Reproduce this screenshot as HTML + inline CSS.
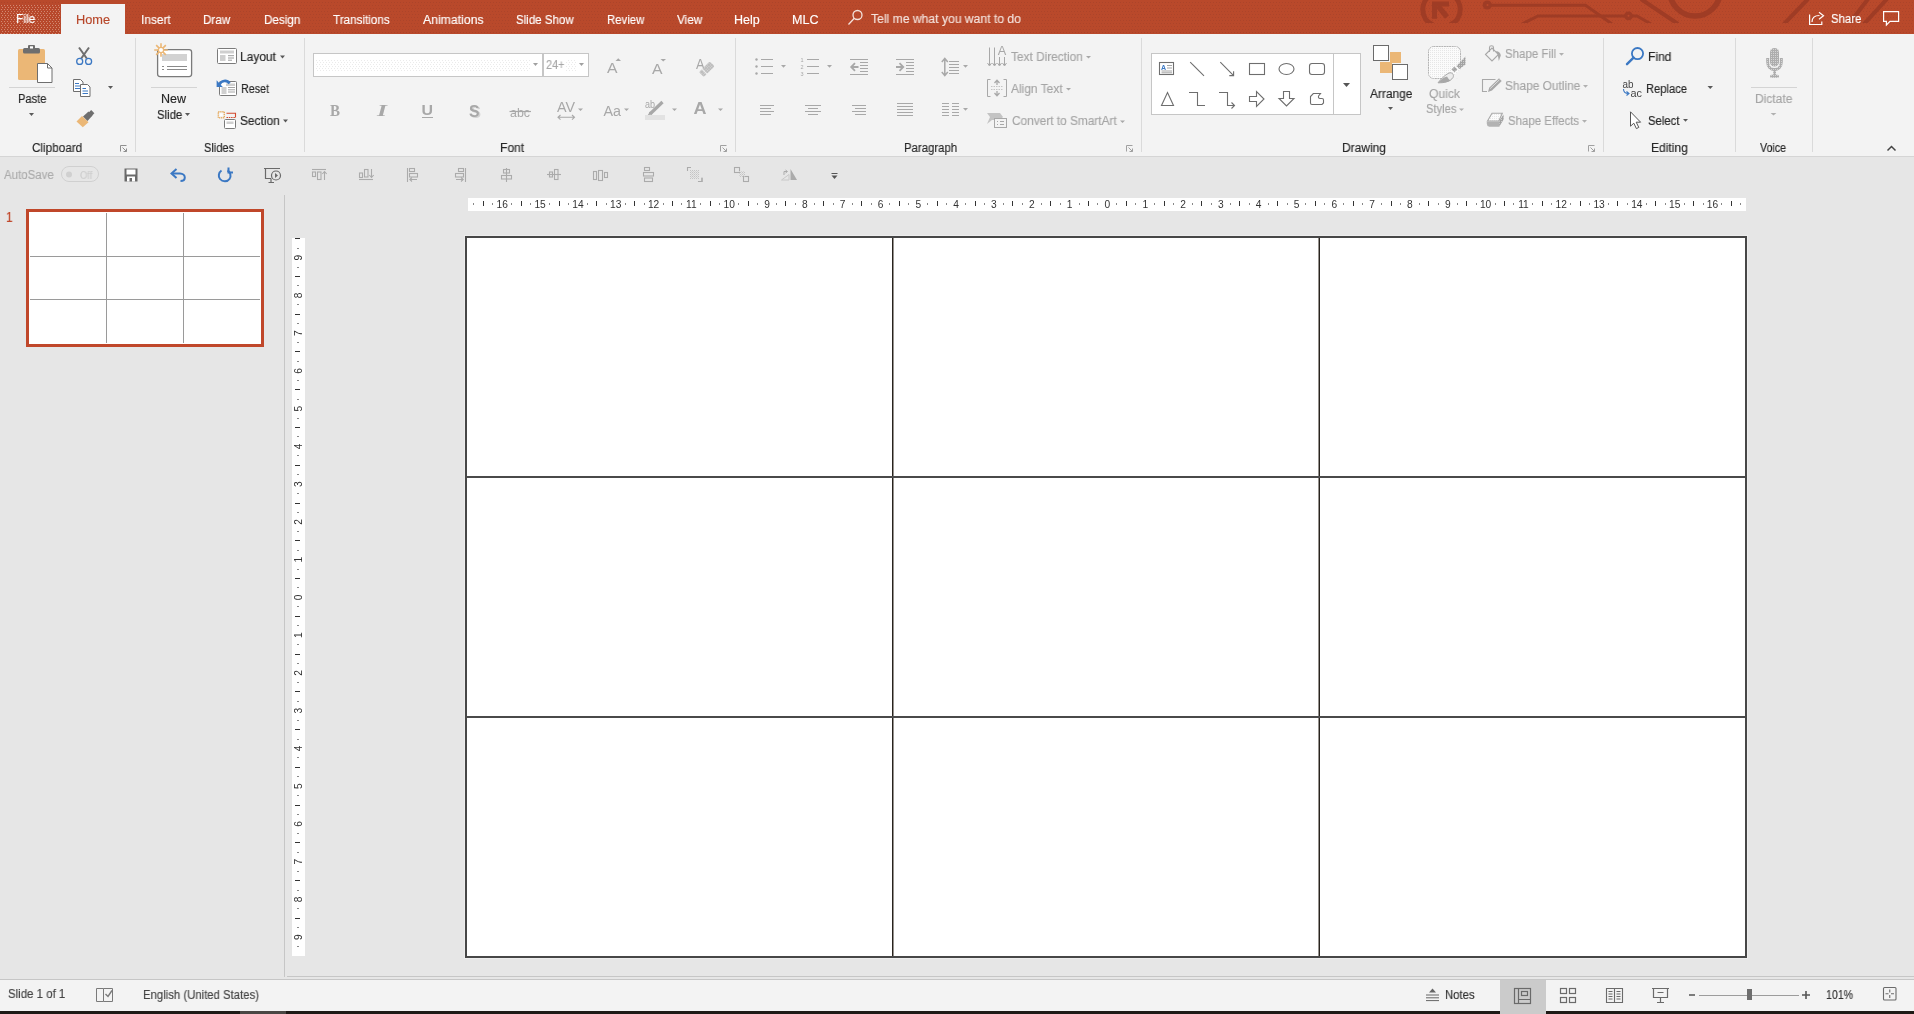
<!DOCTYPE html>
<html><head><meta charset="utf-8">
<style>
*{margin:0;padding:0;box-sizing:border-box}
html,body{width:1914px;height:1014px;overflow:hidden;background:#e6e6e6;font-family:"Liberation Sans",sans-serif;position:relative}
.a{position:absolute}
.t{position:absolute;white-space:nowrap;line-height:1;font-family:"Liberation Sans",sans-serif;transform-origin:0 0;will-change:transform;-webkit-text-stroke:0.15px currentColor}
#titlebar{left:0;top:0;width:1914px;height:34px;background:#b9492b}
#filetab{left:0;top:4px;width:61px;height:30px;background:#b9492c}
#hometab{left:61px;top:4px;width:64px;height:30px;background:#f3f3f3}
#ribbon{left:0;top:34px;width:1914px;height:122px;background:#f3f3f3}
#ribline{left:0;top:156px;width:1914px;height:1px;background:#d5d5d5}
#thumbsep{left:284px;top:195px;width:1px;height:782px;background:#c6c6c6}
#hline{left:287px;top:976px;width:1627px;height:1px;background:#c6c6c6}
#status{left:0;top:979px;width:1914px;height:32px;background:#f3f3f3;border-top:1px solid #c6c6c6}
#bottombar{left:0;top:1011px;width:1914px;height:3px;background:#1e1a16}
#slide{left:465px;top:236px;width:1282px;height:722px;background:#fff;border:2px solid #474747;box-shadow:0 0 0 1px #ededed}
.vl{position:absolute;top:0;width:2px;height:718px;background:#2b2722}
.hl{position:absolute;left:0;height:2px;width:1278px;background:#4a4a4a}
#thumb{left:26px;top:209px;width:238px;height:138px;border:3px solid #c0472a;background:#fff}
#hruler{left:468px;top:198px;width:1278px;height:13px;background:#fff}
#vruler{left:292px;top:238px;width:13px;height:718px;background:#fff}

</style></head><body>
<div id="titlebar" class="a"></div>
<div id="filetab" class="a"></div>
<div id="hometab" class="a"></div>
<div id="ribbon" class="a"></div>
<div id="ribline" class="a"></div>
<div id="thumbsep" class="a"></div>
<div id="hline" class="a"></div>
<div id="status" class="a"></div>
<div id="bottombar" class="a"></div>
<div id="thumb" class="a"></div>
<div id="hruler" class="a"></div>
<div id="vruler" class="a"></div>
<div id="slide" class="a">
  <div class="vl" style="left:425px;background:linear-gradient(to right,#28231e 50%,#96928e 50%)"></div>
  <div class="vl" style="left:851px;background:linear-gradient(to right,#96928e 50%,#28231e 50%)"></div>
  <div class="hl" style="top:238px"></div>
  <div class="hl" style="top:478px"></div>
</div>

<svg class="a" style="left:0;top:0;will-change:transform" width="1914" height="1014" viewBox="0 0 1914 1014">
<defs><pattern id="tbdots" x="0" y="0" width="3" height="6" patternUnits="userSpaceOnUse"><rect x="1" y="2" width="1" height="1" fill="#a8422a" opacity="0.75"/><rect x="0" y="5" width="1" height="1" fill="#a8422a" opacity="0.75"/></pattern><pattern id="filedots" x="0" y="0" width="3" height="4" patternUnits="userSpaceOnUse"><rect x="1" y="1" width="1" height="1" fill="#d9937b" opacity="0.85"/><rect x="2" y="3" width="1" height="1" fill="#d9937b" opacity="0.85"/></pattern></defs>
<rect x="0" y="0" width="1914" height="34" fill="url(#tbdots)"/>
<rect x="61" y="0" width="64" height="4" fill="#b9492b"/><rect x="61" y="4" width="64" height="30" fill="#f3f3f3"/>
<rect x="0" y="5" width="60" height="29" fill="url(#filedots)"/>
<defs><clipPath id="tbclip"><rect x="0" y="0" width="1914" height="23"/></clipPath></defs>
<g clip-path="url(#tbclip)">
<g fill="none" stroke="#9f3c25" stroke-width="5"><path d="M1433.1 25A16.8 16.8 0 0 1 1433.1 -6"/><path d="M1449.9 -6A16.8 16.8 0 0 1 1449.9 25"/></g>
<path d="M1438 6L1447 17" stroke="#9f3c25" stroke-width="5.2" fill="none"/><path d="M1432 1.6H1449V6.6H1437V18.8H1432Z" fill="#9f3c25"/>
<g fill="none" stroke="#9f3c25" stroke-width="3"><path d="M1490 5.3H1585.5L1612 24"/><path d="M1522 24L1538 16H1637L1651 24"/></g>
<circle cx="1487.3" cy="5" r="4.6" fill="#9f3c25"/><circle cx="1487.5" cy="5" r="1" fill="#b9492b"/>
<circle cx="1628.5" cy="15.8" r="4.4" fill="#9f3c25"/><circle cx="1628.5" cy="15.8" r="1" fill="#b9492b"/>
<g fill="none" stroke="#9f3c25" stroke-width="4"><path d="M1641 -1L1678 24"/><circle cx="1695" cy="-9.2" r="25.2" stroke-width="5.6"/><path d="M1808 -1L1784 24"/><path d="M1868 -1L1849 24"/><path d="M1887 -1L1864 24"/></g>
</g>
<g fill="none" stroke="#f4e3dd" stroke-width="1.3"><circle cx="857.5" cy="15" r="4.5"/><path d="M854.3 18.3L848.5 24.5"/></g>
<g fill="none" stroke="#fff" stroke-width="1.2"><path d="M1809.6 14.5V24.5H1821.8V21.5"/><path d="M1812 22C1812 17 1815 15.5 1819.5 15.5"/><path d="M1819 12.3L1823.5 15.8L1819 19.3"/></g>
<path d="M1883.6 11.6H1898.6V21.4H1890L1886.4 25V21.4H1883.6Z" fill="none" stroke="#fff" stroke-width="1.2"/>
<path d="M135.5 38V152" stroke="#dadada"/>
<path d="M304.5 38V152" stroke="#dadada"/>
<path d="M735.5 38V152" stroke="#dadada"/>
<path d="M1141.5 38V152" stroke="#dadada"/>
<path d="M1603.5 38V152" stroke="#dadada"/>
<path d="M1735.5 38V152" stroke="#dadada"/>
<path d="M1812.5 38V152" stroke="#dadada"/>
<rect x="18" y="49" width="27" height="31" rx="1.5" fill="#ebb776"/>
<rect x="23" y="48" width="17" height="5.5" rx="1.5" fill="#6e6e6e"/><rect x="28" y="45" width="7" height="5" rx="1" fill="#6e6e6e"/><rect x="30" y="46.3" width="3" height="2.2" fill="#fff"/>
<path d="M37.5 63.5H47.5L52 68V82.5H37.5Z" fill="#fff" stroke="#6e6e6e"/><path d="M47.5 63.5V68H52" fill="none" stroke="#6e6e6e"/>
<path d="M9 87.5H55" stroke="#d4d4d4"/>
<path d="M29 113H34L31.5 116Z" fill="#595959"/>
<path d="M79 47.5L86.8 58.5M89 47.5L81.2 58.5" stroke="#6e6e6e" stroke-width="2"/>
<circle cx="79.7" cy="61.4" r="3" fill="none" stroke="#3b78c3" stroke-width="1.3"/><circle cx="88.6" cy="61.4" r="3" fill="none" stroke="#3b78c3" stroke-width="1.3"/>
<path d="M73.5 79.5H80.5L83 82V91.5H73.5Z" fill="#fff" stroke="#6e6e6e"/>
<path d="M75 83.5H79M75 86H80M75 88.5H80" stroke="#3b78c3"/>
<path d="M80.5 84.5H87.5L90 87V96.5H80.5Z" fill="#fff" stroke="#6e6e6e"/>
<path d="M82.5 88.5H86M82.5 91H88M82.5 93.5H88" stroke="#3b78c3"/>
<path d="M108 86H113L110.5 89Z" fill="#595959"/>
<path d="M76.5 121.5L82 116L88.5 122.3L82.8 127.3Z" fill="#ebb776"/>
<path d="M83 116.5L88.5 111.5L92.5 115.5L87.5 121Z" fill="#6e6e6e"/><rect x="89" y="111" width="4.5" height="4.5" transform="rotate(45 91.2 113.2)" fill="#6e6e6e"/>
<path d="M120.5 151.5V145.5H126.5" fill="none" stroke="#8f8f8f"/><path d="M122.5 147.5L126.5 151.5M126.5 148.5V151.5H123.5" fill="none" stroke="#8f8f8f"/>
<rect x="157.6" y="49.6" width="34" height="27" rx="2.5" fill="#fff" stroke="#7a7a7a" stroke-width="1.3"/>
<rect x="162" y="54" width="25" height="7" fill="#d2d2d2"/>
<path d="M162 66.5H164M167 66.5H187M162 69.5H164M167 69.5H187" stroke="#8a8a8a"/>
<path d="M163.60 50.00L167.80 50.00M162.84 51.84L165.81 54.81M161.00 52.60L161.00 56.80M159.16 51.84L156.19 54.81M158.40 50.00L154.20 50.00M159.16 48.16L156.19 45.19M161.00 47.40L161.00 43.20M162.84 48.16L165.81 45.19" stroke="#ebb776" stroke-width="1.6" fill="none"/><circle cx="161" cy="50" r="2.6" fill="#fff" stroke="#ebb776" stroke-width="1.2"/>
<path d="M151 87.5H197" stroke="#d4d4d4"/>
<path d="M185 113H190L187.5 116Z" fill="#595959"/>
<rect x="217.5" y="48.5" width="19" height="15" rx="1" fill="#fff" stroke="#7a7a7a"/>
<rect x="220" y="50.5" width="14" height="3" fill="#cfcfcf"/><rect x="220" y="55" width="5.5" height="6" fill="#cfcfcf"/>
<path d="M228 55.7H234M228 58H234M228 60.2H232" stroke="#9a9a9a"/>
<path d="M280 55.5H285L282.5 58.5Z" fill="#595959"/>
<rect x="219.5" y="81.5" width="17" height="14" rx="1" fill="#fff" stroke="#7a7a7a"/>
<rect x="226" y="83.5" width="9" height="2.5" fill="#cfcfcf"/><rect x="221.5" y="87" width="5" height="7" fill="#cfcfcf"/><path d="M228 87.5H235M228 89.8H235M228 92H235" stroke="#9a9a9a" stroke-width="0.9"/>
<path d="M219.5 84.5C221 80.5 227 79.3 229.5 83.5" fill="none" stroke="#3b78c3" stroke-width="2.6"/><path d="M216.6 80.2L222.8 87H216.6Z" fill="#3b78c3"/>
<rect x="218.3" y="111.7" width="6" height="6" fill="none" stroke="#e6aa5e" stroke-width="1.4" stroke-dasharray="1.2 0.8"/><rect x="220" y="113.4" width="2.6" height="2.6" fill="#fff"/>
<path d="M226.5 113.3H235.5V117.5" fill="none" stroke="#d24a2e" stroke-width="1.1"/><path d="M226.5 117.5H235.5" stroke="#d24a2e" stroke-width="1.1" stroke-dasharray="1.5 0.8"/>
<rect x="224.5" y="119.5" width="11" height="9" rx="1" fill="#fff" stroke="#7a7a7a"/><rect x="226.5" y="121.5" width="7" height="2.5" fill="#cfcfcf"/>
<path d="M283 119.5H288L285.5 122.5Z" fill="#595959"/>
<rect x="313.5" y="53.5" width="229" height="23" fill="#fff" stroke="#c6c6c6"/>
<rect x="543.5" y="53.5" width="45" height="23" fill="#fff" stroke="#c6c6c6"/>
<defs><pattern id="boxdots" width="3" height="4" patternUnits="userSpaceOnUse"><rect x="1" y="0" width="1" height="1" fill="#ebebeb"/><rect x="2" y="2" width="1" height="1" fill="#ebebeb"/></pattern></defs><rect x="316" y="59" width="214" height="13" fill="url(#boxdots)"/><rect x="566" y="59" width="10" height="13" fill="url(#boxdots)"/>
<path d="M533 63H538L535.5 66Z" fill="#a0a0a0"/>
<path d="M579 63H584L581.5 66Z" fill="#a0a0a0"/>
<text x="607" y="73.3" font-family="Liberation Sans" font-size="15" fill="#a8a8a8" textLength="10.5" lengthAdjust="spacingAndGlyphs">A</text>
<path d="M615.5 61H621L618.25 58.3Z" fill="#a8a8a8"/>
<text x="652" y="73.9" font-family="Liberation Sans" font-size="15" fill="#a8a8a8" textLength="10.5" lengthAdjust="spacingAndGlyphs">A</text>
<path d="M660.5 59H666L663.25 61.5Z" fill="#a8a8a8"/>
<text x="696" y="68.6" font-family="Liberation Sans" font-size="14" fill="#a8a8a8" textLength="8.5" lengthAdjust="spacingAndGlyphs">A</text>
<defs><pattern id="erdots" width="2" height="2" patternUnits="userSpaceOnUse"><rect width="2" height="2" fill="#bcbcbc"/><rect x="1" y="1" width="1" height="1" fill="#dadada"/></pattern></defs><g transform="translate(706.8 69.2) rotate(-45)"><rect x="-7.6" y="-3.4" width="15.2" height="6.8" rx="1.3" fill="url(#erdots)"/><rect x="-3.8" y="-4" width="0.9" height="8" fill="#f3f3f3"/></g>
<text x="330" y="116.3" font-family="Liberation Serif" font-weight="bold" font-size="17" fill="#a8a8a8" textLength="10" lengthAdjust="spacingAndGlyphs">B</text>
<text x="377" y="116.3" font-family="Liberation Serif" font-style="italic" font-weight="bold" font-size="17" fill="#a8a8a8" textLength="10" lengthAdjust="spacingAndGlyphs">I</text>
<text x="421.5" y="115.3" font-family="Liberation Sans" font-weight="bold" font-size="15.5" fill="#a8a8a8" textLength="11.5" lengthAdjust="spacingAndGlyphs">U</text><path d="M422 117.5H433" stroke="#a8a8a8"/>
<text x="470.5" y="117.5" font-family="Liberation Sans" font-weight="bold" font-size="17" fill="#d4d4d4" textLength="10.5" lengthAdjust="spacingAndGlyphs">S</text>
<text x="469" y="116.5" font-family="Liberation Sans" font-weight="bold" font-size="17" fill="#a8a8a8" textLength="10.5" lengthAdjust="spacingAndGlyphs">S</text>
<text x="510" y="116.5" font-family="Liberation Sans" font-size="13" fill="#a8a8a8" textLength="20" lengthAdjust="spacingAndGlyphs">abc</text><path d="M509.5 111.5H531" stroke="#a8a8a8" stroke-width="1.2"/>
<text x="557" y="112" font-family="Liberation Sans" font-size="14" fill="#a8a8a8" textLength="18" lengthAdjust="spacingAndGlyphs">AV</text>
<path d="M558 117.3H574.5M560.5 115L558 117.3L560.5 119.6M572 115L574.5 117.3L572 119.6" fill="none" stroke="#a8a8a8" stroke-width="1.1"/>
<path d="M578 108.5H583L580.5 111Z" fill="#a8a8a8"/>
<text x="603.5" y="115.5" font-family="Liberation Sans" font-size="15.5" fill="#a8a8a8" textLength="17.5" lengthAdjust="spacingAndGlyphs">Aa</text>
<path d="M624 108.5H629L626.5 111Z" fill="#a8a8a8"/>
<text x="645" y="108" font-family="Liberation Sans" font-size="10.5" fill="#a8a8a8" textLength="10" lengthAdjust="spacingAndGlyphs">ab</text>
<path d="M650 114L662.5 102" stroke="#a8a8a8" stroke-width="3.2"/><path d="M647.5 115.5L650 111.5L652.5 114Z" fill="#a8a8a8"/>
<rect x="645" y="115" width="20" height="5" fill="#e2e2e2"/>
<path d="M672 108.5H677L674.5 111Z" fill="#a8a8a8"/>
<text x="693.5" y="114" font-family="Liberation Sans" font-weight="bold" font-size="17" fill="#a8a8a8" textLength="13" lengthAdjust="spacingAndGlyphs">A</text>
<path d="M718 108.5H723L720.5 111Z" fill="#a8a8a8"/>
<path d="M720.5 151.5V145.5H726.5" fill="none" stroke="#a0a0a0"/><path d="M722.5 147.5L726.5 151.5M726.5 148.5V151.5H723.5" fill="none" stroke="#a0a0a0"/>
<g fill="#a8a8a8"><circle cx="756.5" cy="59.5" r="1.2"/><circle cx="756.5" cy="66.5" r="1.2"/><circle cx="756.5" cy="73.5" r="1.2"/></g>
<path d="M761 59.5H773M761 66.5H773M761 73.5H773" stroke="#a8a8a8"/>
<path d="M781 65H786L783.5 67.7Z" fill="#a8a8a8"/>
<g font-family="Liberation Sans" font-size="5.5" fill="#a8a8a8"><text x="800.5" y="62">1</text><text x="800.5" y="69">2</text><text x="800.5" y="76">3</text></g>
<path d="M807 59.5H819M807 66.5H819M807 73.5H819" stroke="#a8a8a8"/>
<path d="M827 65H832L829.5 67.7Z" fill="#a8a8a8"/>
<path d="M850 59.5H868M860 62.5H868M860 65.5H868M860 68.5H868M860 71.5H868M850 74.5H868" stroke="#a8a8a8"/>
<path d="M858.5 67H851.5M855 63.2L851.2 67L855 70.8" fill="none" stroke="#a8a8a8" stroke-width="1.8"/>
<path d="M896 59.5H914M906 62.5H914M906 65.5H914M906 68.5H914M906 71.5H914M896 74.5H914" stroke="#a8a8a8"/>
<path d="M896 67H903M899.5 63.2L903.3 67L899.5 70.8" fill="none" stroke="#a8a8a8" stroke-width="1.8"/>
<path d="M944.8 59V75M941.8 62L944.8 58.5L947.8 62M941.8 72L944.8 75.5L947.8 72" fill="none" stroke="#a8a8a8" stroke-width="1.5"/>
<path d="M949 61.5H959M949 64.5H959M949 67.5H959M949 70.5H959M949 73.5H959" stroke="#a8a8a8"/>
<path d="M963 65H968L965.5 67.7Z" fill="#a8a8a8"/>
<path d="M760 105.5H774M760 108.5H771M760 111.5H774M760 114.5H771" stroke="#a8a8a8"/>
<path d="M805 105.5H821M808 108.5H818M805 111.5H821M808 114.5H818" stroke="#a8a8a8"/>
<path d="M852 105.5H866M855 108.5H866M852 111.5H866M855 114.5H866" stroke="#a8a8a8"/>
<path d="M897 103.5H913M897 106.5H913M897 109.5H913M897 112.5H913M897 115.5H913" stroke="#a8a8a8"/>
<path d="M942 103.5H949M942 106.5H949M942 109.5H949M942 112.5H949M942 115.5H949M952 103.5H959M952 106.5H959M952 109.5H959M952 112.5H959M952 115.5H959" stroke="#a8a8a8"/>
<path d="M963 108H968L965.5 110.7Z" fill="#a8a8a8"/>
<path d="M989.5 47.5V65M994.5 47.5V65M999.5 57V65M1004.5 57V65" stroke="#a8a8a8"/>
<path d="M987.5 63L989.5 66L991.5 63M992.5 63L994.5 66L996.5 63M997.5 63L999.5 66L1001.5 63M1002.5 63L1004.5 66L1006.5 63" fill="none" stroke="#a8a8a8"/>
<text x="997.8" y="55" font-family="Liberation Sans" font-size="12" fill="#a8a8a8" textLength="8.5" lengthAdjust="spacingAndGlyphs">A</text>
<path d="M1086 56H1091L1088.5 58.5Z" fill="#a8a8a8"/>
<path d="M990.5 79.5H987.5V96.5H990.5M1003.5 79.5H1006.5V96.5H1003.5" fill="none" stroke="#a8a8a8"/>
<path d="M991 86.5H1003M991 89.5H1003" stroke="#c4c4c4" stroke-dasharray="1.5 1"/>
<path d="M997 80.5V85M994.5 83L997 80.3L999.5 83M997 91V95.5M994.5 93L997 95.7L999.5 93" fill="none" stroke="#a8a8a8" stroke-width="1.3"/>
<path d="M1066 88H1071L1068.5 90.5Z" fill="#a8a8a8"/>
<path d="M987 113H1000L1003 117L1000 120H992L987 124L990 117Z" fill="#c4c4c4"/>
<rect x="994.5" y="118.5" width="12" height="9" fill="#f3f3f3" stroke="#a8a8a8"/><path d="M997 121.5H998M1000 121.5H1004M997 124.5H998M1000 124.5H1004" stroke="#a8a8a8"/>
<path d="M1120 120.5H1125L1122.5 123Z" fill="#a8a8a8"/>
<path d="M1126.5 151.5V145.5H1132.5" fill="none" stroke="#a0a0a0"/><path d="M1128.5 147.5L1132.5 151.5M1132.5 148.5V151.5H1129.5" fill="none" stroke="#a0a0a0"/>
<rect x="1151.5" y="53.5" width="209" height="61" fill="#fff" stroke="#c6c6c6"/><path d="M1333.5 54V114" stroke="#c6c6c6"/>
<g fill="none" stroke="#6e6e6e" stroke-width="1.1"><rect x="1159.5" y="62.5" width="14" height="12"/><path d="M1190.2 62.2L1204 75.8"/><path d="M1220.3 62.2L1233.6 75.6M1233.6 71.3V75.6H1229.3"/><rect x="1249.5" y="63.5" width="15" height="11"/><ellipse cx="1286.5" cy="69" rx="7.5" ry="5.5"/><rect x="1309.5" y="63.5" width="15" height="11" rx="2.5"/><path d="M1161.5 105.5H1173.5L1167.5 92.5Z"/><path d="M1189 92.5H1197.5V105.5H1205"/><path d="M1219 92.5H1227.5V105.5H1234.5M1231.5 102.5L1234.5 105.5L1231.5 108.5"/><path d="M1249.5 96.5H1256.5V91.5L1264 99L1256.5 106.5V101.5H1249.5Z"/><path d="M1283.5 91.5H1289.5V98.5H1294L1286.5 106L1279 98.5H1283.5Z"/><path d="M1313.3 93.5H1320.5L1318.6 96C1318 97.5 1318.8 98.5 1320 98.5H1322C1323 98.5 1323.5 99.2 1323.5 100V103L1322 104.5H1312C1311 104.5 1310.5 104 1310.5 103V96.5Z"/></g>
<text x="1161" y="69.5" font-family="Liberation Sans" font-weight="bold" font-size="7" fill="#3b78c3">A</text>
<path d="M1167 65.5H1172M1167 68H1172M1161.5 71H1172M1161.5 72.8H1172" stroke="#9a9a9a" stroke-width="0.9"/>
<path d="M1343 83H1350L1346.5 87Z" fill="#555"/>
<rect x="1390" y="52" width="11" height="11" fill="#ebb776"/><rect x="1380" y="62" width="12" height="11" fill="#ebb776"/>
<rect x="1373.5" y="45.5" width="15" height="15" fill="#fff" stroke="#6b6b6b"/><rect x="1392.5" y="64.5" width="15" height="15" fill="#fff" stroke="#6b6b6b"/>
<path d="M1388 107H1393L1390.5 110Z" fill="#595959"/>
<defs><pattern id="ltdots" x="0" y="0" width="2" height="2" patternUnits="userSpaceOnUse"><rect width="2" height="2" fill="#fbfbfb"/><rect x="0" y="0" width="1" height="1" fill="#e6e6e6"/></pattern><pattern id="gdots" x="0" y="0" width="2" height="2" patternUnits="userSpaceOnUse"><rect width="2" height="2" fill="#a2a2a2"/><rect x="1" y="1" width="1" height="1" fill="#cdcdcd"/></pattern></defs>
<rect x="1428.5" y="46.5" width="32" height="32" rx="5" fill="url(#ltdots)" stroke="#b4b4b4" stroke-dasharray="2 0.6"/>
<path d="M1450 79.5L1461 68.5V78.5Z" fill="#f3f3f3"/>
<path d="M1456.5 66L1465.5 56.5V64.5L1459.5 69Z" fill="url(#gdots)"/>
<rect x="1452.3" y="67.3" width="4.2" height="4.2" transform="rotate(45 1454.4 69.4)" fill="url(#gdots)"/>
<path d="M1438 82.8C1441 79 1445 74.8 1449 73C1452 72 1454.5 74.5 1453 77.5C1450.5 81.5 1444.5 83 1438 82.8Z" fill="#ececec" stroke="#a8a8a8" stroke-width="1"/>
<path d="M1438 82.8C1441 79.5 1444 77 1447 76.5C1448.5 79 1450 80.5 1451 80.5C1447.5 82.5 1443 83 1438 82.8Z" fill="#a8a8a8"/>
<path d="M1459 108.5H1464L1461.5 111Z" fill="#b0b0b0"/>
<g fill="none" stroke="#a8a8a8" stroke-width="1.1"><path d="M1485.5 54.5L1492 48L1498.5 54.5L1492 61Z"/><path d="M1489.5 52V47.5Q1489.5 45.8 1491.5 45.8Q1493.5 45.8 1493.5 47.5V51.5"/></g>
<path d="M1496 51Q1500.5 51.5 1500.8 55.5L1498.8 61L1497.8 55Z" fill="#a8a8a8"/>
<path d="M1559 53H1564L1561.5 55.7Z" fill="#b0b0b0"/>
<path d="M1495.5 79.5H1482.5V91.5H1487" fill="none" stroke="#a8a8a8" stroke-width="1.1"/><path d="M1488 92L1489.2 87.8L1499 78.3L1501.7 81L1492 90.5Z" fill="#a8a8a8"/><path d="M1490.2 88.6L1499.4 79.8" stroke="#f3f3f3" stroke-width="0.7"/>
<path d="M1583 85H1588L1585.5 87.7Z" fill="#b0b0b0"/>
<path d="M1487.5 121L1492 113.3H1502.3L1498.8 121Z" fill="url(#ltdots)" stroke="#a8a8a8" stroke-width="1.1"/>
<path d="M1486.8 121.5H1498.8L1503.6 114.5V119.5L1499.3 126.8H1489.3Q1486.8 126.3 1486.8 123.8Z" fill="#b2b2b2"/><path d="M1499.5 121.3L1503.3 115V119.5L1499.3 126" fill="url(#gdots)"/>
<path d="M1582 120H1587L1584.5 122.7Z" fill="#b0b0b0"/>
<path d="M1588.5 151.5V145.5H1594.5" fill="none" stroke="#a0a0a0"/><path d="M1590.5 147.5L1594.5 151.5M1594.5 148.5V151.5H1591.5" fill="none" stroke="#a0a0a0"/>
<circle cx="1637.5" cy="53.6" r="5.6" fill="none" stroke="#3b78c3" stroke-width="1.8"/><path d="M1633.6 57.6L1627 64.2" stroke="#3b78c3" stroke-width="2.4" stroke-linecap="round"/>
<text x="1622.5" y="88" font-family="Liberation Sans" font-size="10.5" fill="#444" textLength="11" lengthAdjust="spacingAndGlyphs">ab</text>
<text x="1630.5" y="96.7" font-family="Liberation Sans" font-size="10.5" fill="#444" textLength="11.5" lengthAdjust="spacingAndGlyphs">ac</text>
<path d="M1623.5 89C1623.5 92 1625 93.5 1628.5 93.5M1626.5 91.5L1629 93.5L1626.5 95.5" fill="none" stroke="#3b78c3" stroke-width="1.1"/>
<path d="M1707.5 86H1713L1710.25 89Z" fill="#595959"/>
<path d="M1630.5 111.8V126.2L1633.8 123.2L1636.4 128.6L1638.8 127.4L1636.2 122.2H1640.6Z" fill="#fff" stroke="#555" stroke-width="1"/>
<path d="M1683 119H1688L1685.5 121.7Z" fill="#595959"/>
<defs><pattern id="micdots" width="2" height="2" patternUnits="userSpaceOnUse"><rect width="2" height="2" fill="#adadad"/><rect x="1" y="1" width="1" height="1" fill="#d4d4d4"/></pattern></defs>
<rect x="1770" y="48" width="9" height="18.5" rx="4.5" fill="url(#micdots)"/>
<path d="M1767.7 58V62C1767.7 72 1781.3 72 1781.3 62V58" fill="none" stroke="url(#micdots)" stroke-width="3"/>
<rect x="1773.2" y="69.5" width="2.8" height="6" fill="url(#micdots)"/><rect x="1770" y="74.7" width="9" height="3" rx="1.5" fill="url(#micdots)"/>
<path d="M1751 87.5H1797" stroke="#d4d4d4"/>
<path d="M1770.6 113H1776.4L1773.5 115.5Z" fill="#b0b0b0"/>
<path d="M1887.5 150.5L1891.5 146.5L1895.5 150.5" fill="none" stroke="#444" stroke-width="1.5"/>
<rect x="61.5" y="166.5" width="37" height="15" rx="7.5" fill="none" stroke="#d0d0d0"/><circle cx="69" cy="174.5" r="3" fill="#d0d0d0"/>
<path d="M124.5 168.5H137.5V181.5H124.5Z" fill="#6a6a6a"/><rect x="126.5" y="169.5" width="9" height="5" fill="#fff"/><rect x="127" y="176.5" width="8" height="5" fill="#fff"/><rect x="129.5" y="178" width="2.5" height="3.5" fill="#6a6a6a"/>
<path d="M173 173.5H180C183 173.5 184.8 175.5 184.8 177.5C184.8 179.5 183.2 181 180.5 181" fill="none" stroke="#3b78c3" stroke-width="2"/><path d="M176.5 169L171.5 173.5L176.5 178" fill="none" stroke="#3b78c3" stroke-width="2"/>
<path d="M221.5 170.5C218.5 172.5 218 176.5 220 179C222.5 182 227.5 182 229.5 179C231.5 176 230.5 172 227.5 170.5" fill="none" stroke="#3b78c3" stroke-width="2"/><path d="M228.5 167.5V172.5H233" fill="none" stroke="#3b78c3" stroke-width="2"/>
<path d="M264 168.5H280M265.5 169V178.5H271M268.5 182.5H274M271 178.5V182.5" fill="none" stroke="#6a6a6a" stroke-width="1.2"/><circle cx="276" cy="175.5" r="4.5" fill="#e6e6e6" stroke="#6a6a6a" stroke-width="1.2"/><path d="M275 173V178L278 175.5Z" fill="#6a6a6a"/>
<g fill="none" stroke="#ababab" stroke-width="1.1"><path d="M312 169.5H326"/><rect x="312.5" y="172" width="3" height="4.5"/><rect x="317.5" y="172" width="3.5" height="7.5"/><path d="M324.5 180V172M322.3 174L324.5 171.5L326.7 174"/><path d="M359 179.5H373"/><rect x="359.5" y="173" width="3" height="4.5"/><rect x="364.5" y="169.5" width="3.5" height="7.5"/><path d="M371.5 169V177M369.3 175L371.5 177.5L373.7 175"/><path d="M407.5 168V182"/><rect x="409.5" y="168.5" width="5" height="3"/><rect x="409.5" y="173.5" width="8" height="3.5"/><path d="M410 179.5H417M412 177.5L409.8 179.5L412 181.5"/><path d="M465.5 168V182"/><rect x="458.5" y="168.5" width="5" height="3"/><rect x="455.5" y="173.5" width="8" height="3.5"/><path d="M456 179.5H463M461 177.5L463.2 179.5L461 181.5"/><path d="M506.5 168V182"/><rect x="503.5" y="169.5" width="6" height="3.5"/><rect x="501.5" y="175.5" width="10" height="3.5"/><path d="M547 174.5H561"/><rect x="549.5" y="172" width="3" height="5"/><rect x="554.5" y="169.5" width="3.5" height="10"/><rect x="593.5" y="171.5" width="3" height="8"/><rect x="598.5" y="170.5" width="4" height="10"/><rect x="604.5" y="172.5" width="3" height="5"/><rect x="644.5" y="167.5" width="5" height="3"/><rect x="643.5" y="172.5" width="10" height="3.5"/><rect x="644.5" y="178" width="8" height="3.5"/></g>
<g fill="none" stroke="#ababab" stroke-width="1.1"><path d="M687.5 171V167.5H691M698.5 182V181.5H702V178M702 182V178"/><path d="M698 181.5H702V177.5"/></g>
<defs><pattern id="qdots" width="2" height="2" patternUnits="userSpaceOnUse"><rect x="0" y="0" width="1" height="1" fill="#c4c4c4"/><rect x="1" y="1" width="1" height="1" fill="#d2d2d2"/></pattern></defs><rect x="690" y="170" width="9" height="9" fill="url(#qdots)"/>
<g fill="none" stroke="#ababab" stroke-width="1.1"><rect x="734.5" y="167.5" width="5" height="5"/><rect x="743.5" y="176.5" width="5" height="5"/></g><rect x="739" y="171" width="6" height="6" fill="url(#qdots)"/>
<path d="M781.5 180L789 174.5V180Z" fill="none" stroke="#c8c8c8"/><path d="M790.5 169L797 180H790.5Z" fill="#ababab"/><path d="M784 175V171.5H787M785.5 170L787.5 171.5L785.5 173" fill="none" stroke="#ababab" stroke-width="1"/>
<path d="M831.5 173.5H837.5" stroke="#555"/><path d="M831.5 175.5H837.5L834.5 179Z" fill="#555"/>
<path d="M106.5 213V343M183.5 213V343M30 256.5H260M30 299.5H260" stroke="#9a9a9a"/>
<rect x="473" y="203" width="1" height="2" fill="#888"/><rect x="483" y="201" width="1" height="5" fill="#333"/><rect x="492" y="203" width="1" height="2" fill="#888"/><text x="502.28" y="207.6" text-anchor="middle" font-family="Liberation Sans" font-size="10.2" fill="#333">16</text><rect x="511" y="203" width="1" height="2" fill="#888"/><rect x="521" y="201" width="1" height="5" fill="#333"/><rect x="530" y="203" width="1" height="2" fill="#888"/><text x="540.10" y="207.6" text-anchor="middle" font-family="Liberation Sans" font-size="10.2" fill="#333">15</text><rect x="549" y="203" width="1" height="2" fill="#888"/><rect x="559" y="201" width="1" height="5" fill="#333"/><rect x="568" y="203" width="1" height="2" fill="#888"/><text x="577.92" y="207.6" text-anchor="middle" font-family="Liberation Sans" font-size="10.2" fill="#333">14</text><rect x="587" y="203" width="1" height="2" fill="#888"/><rect x="596" y="201" width="1" height="5" fill="#333"/><rect x="606" y="203" width="1" height="2" fill="#888"/><text x="615.74" y="207.6" text-anchor="middle" font-family="Liberation Sans" font-size="10.2" fill="#333">13</text><rect x="625" y="203" width="1" height="2" fill="#888"/><rect x="634" y="201" width="1" height="5" fill="#333"/><rect x="644" y="203" width="1" height="2" fill="#888"/><text x="653.56" y="207.6" text-anchor="middle" font-family="Liberation Sans" font-size="10.2" fill="#333">12</text><rect x="663" y="203" width="1" height="2" fill="#888"/><rect x="672" y="201" width="1" height="5" fill="#333"/><rect x="681" y="203" width="1" height="2" fill="#888"/><text x="691.38" y="207.6" text-anchor="middle" font-family="Liberation Sans" font-size="10.2" fill="#333">11</text><rect x="700" y="203" width="1" height="2" fill="#888"/><rect x="710" y="201" width="1" height="5" fill="#333"/><rect x="719" y="203" width="1" height="2" fill="#888"/><text x="729.20" y="207.6" text-anchor="middle" font-family="Liberation Sans" font-size="10.2" fill="#333">10</text><rect x="738" y="203" width="1" height="2" fill="#888"/><rect x="748" y="201" width="1" height="5" fill="#333"/><rect x="757" y="203" width="1" height="2" fill="#888"/><text x="767.02" y="207.6" text-anchor="middle" font-family="Liberation Sans" font-size="10.2" fill="#333">9</text><rect x="776" y="203" width="1" height="2" fill="#888"/><rect x="785" y="201" width="1" height="5" fill="#333"/><rect x="795" y="203" width="1" height="2" fill="#888"/><text x="804.84" y="207.6" text-anchor="middle" font-family="Liberation Sans" font-size="10.2" fill="#333">8</text><rect x="814" y="203" width="1" height="2" fill="#888"/><rect x="823" y="201" width="1" height="5" fill="#333"/><rect x="833" y="203" width="1" height="2" fill="#888"/><text x="842.66" y="207.6" text-anchor="middle" font-family="Liberation Sans" font-size="10.2" fill="#333">7</text><rect x="852" y="203" width="1" height="2" fill="#888"/><rect x="861" y="201" width="1" height="5" fill="#333"/><rect x="871" y="203" width="1" height="2" fill="#888"/><text x="880.48" y="207.6" text-anchor="middle" font-family="Liberation Sans" font-size="10.2" fill="#333">6</text><rect x="889" y="203" width="1" height="2" fill="#888"/><rect x="899" y="201" width="1" height="5" fill="#333"/><rect x="908" y="203" width="1" height="2" fill="#888"/><text x="918.30" y="207.6" text-anchor="middle" font-family="Liberation Sans" font-size="10.2" fill="#333">5</text><rect x="927" y="203" width="1" height="2" fill="#888"/><rect x="937" y="201" width="1" height="5" fill="#333"/><rect x="946" y="203" width="1" height="2" fill="#888"/><text x="956.12" y="207.6" text-anchor="middle" font-family="Liberation Sans" font-size="10.2" fill="#333">4</text><rect x="965" y="203" width="1" height="2" fill="#888"/><rect x="975" y="201" width="1" height="5" fill="#333"/><rect x="984" y="203" width="1" height="2" fill="#888"/><text x="993.94" y="207.6" text-anchor="middle" font-family="Liberation Sans" font-size="10.2" fill="#333">3</text><rect x="1003" y="203" width="1" height="2" fill="#888"/><rect x="1012" y="201" width="1" height="5" fill="#333"/><rect x="1022" y="203" width="1" height="2" fill="#888"/><text x="1031.76" y="207.6" text-anchor="middle" font-family="Liberation Sans" font-size="10.2" fill="#333">2</text><rect x="1041" y="203" width="1" height="2" fill="#888"/><rect x="1050" y="201" width="1" height="5" fill="#333"/><rect x="1060" y="203" width="1" height="2" fill="#888"/><text x="1069.58" y="207.6" text-anchor="middle" font-family="Liberation Sans" font-size="10.2" fill="#333">1</text><rect x="1079" y="203" width="1" height="2" fill="#888"/><rect x="1088" y="201" width="1" height="5" fill="#333"/><rect x="1097" y="203" width="1" height="2" fill="#888"/><text x="1107.40" y="207.6" text-anchor="middle" font-family="Liberation Sans" font-size="10.2" fill="#333">0</text><rect x="1116" y="203" width="1" height="2" fill="#888"/><rect x="1126" y="201" width="1" height="5" fill="#333"/><rect x="1135" y="203" width="1" height="2" fill="#888"/><text x="1145.22" y="207.6" text-anchor="middle" font-family="Liberation Sans" font-size="10.2" fill="#333">1</text><rect x="1154" y="203" width="1" height="2" fill="#888"/><rect x="1164" y="201" width="1" height="5" fill="#333"/><rect x="1173" y="203" width="1" height="2" fill="#888"/><text x="1183.04" y="207.6" text-anchor="middle" font-family="Liberation Sans" font-size="10.2" fill="#333">2</text><rect x="1192" y="203" width="1" height="2" fill="#888"/><rect x="1201" y="201" width="1" height="5" fill="#333"/><rect x="1211" y="203" width="1" height="2" fill="#888"/><text x="1220.86" y="207.6" text-anchor="middle" font-family="Liberation Sans" font-size="10.2" fill="#333">3</text><rect x="1230" y="203" width="1" height="2" fill="#888"/><rect x="1239" y="201" width="1" height="5" fill="#333"/><rect x="1249" y="203" width="1" height="2" fill="#888"/><text x="1258.68" y="207.6" text-anchor="middle" font-family="Liberation Sans" font-size="10.2" fill="#333">4</text><rect x="1268" y="203" width="1" height="2" fill="#888"/><rect x="1277" y="201" width="1" height="5" fill="#333"/><rect x="1287" y="203" width="1" height="2" fill="#888"/><text x="1296.50" y="207.6" text-anchor="middle" font-family="Liberation Sans" font-size="10.2" fill="#333">5</text><rect x="1305" y="203" width="1" height="2" fill="#888"/><rect x="1315" y="201" width="1" height="5" fill="#333"/><rect x="1324" y="203" width="1" height="2" fill="#888"/><text x="1334.32" y="207.6" text-anchor="middle" font-family="Liberation Sans" font-size="10.2" fill="#333">6</text><rect x="1343" y="203" width="1" height="2" fill="#888"/><rect x="1353" y="201" width="1" height="5" fill="#333"/><rect x="1362" y="203" width="1" height="2" fill="#888"/><text x="1372.14" y="207.6" text-anchor="middle" font-family="Liberation Sans" font-size="10.2" fill="#333">7</text><rect x="1381" y="203" width="1" height="2" fill="#888"/><rect x="1391" y="201" width="1" height="5" fill="#333"/><rect x="1400" y="203" width="1" height="2" fill="#888"/><text x="1409.96" y="207.6" text-anchor="middle" font-family="Liberation Sans" font-size="10.2" fill="#333">8</text><rect x="1419" y="203" width="1" height="2" fill="#888"/><rect x="1428" y="201" width="1" height="5" fill="#333"/><rect x="1438" y="203" width="1" height="2" fill="#888"/><text x="1447.78" y="207.6" text-anchor="middle" font-family="Liberation Sans" font-size="10.2" fill="#333">9</text><rect x="1457" y="203" width="1" height="2" fill="#888"/><rect x="1466" y="201" width="1" height="5" fill="#333"/><rect x="1476" y="203" width="1" height="2" fill="#888"/><text x="1485.60" y="207.6" text-anchor="middle" font-family="Liberation Sans" font-size="10.2" fill="#333">10</text><rect x="1495" y="203" width="1" height="2" fill="#888"/><rect x="1504" y="201" width="1" height="5" fill="#333"/><rect x="1513" y="203" width="1" height="2" fill="#888"/><text x="1523.42" y="207.6" text-anchor="middle" font-family="Liberation Sans" font-size="10.2" fill="#333">11</text><rect x="1532" y="203" width="1" height="2" fill="#888"/><rect x="1542" y="201" width="1" height="5" fill="#333"/><rect x="1551" y="203" width="1" height="2" fill="#888"/><text x="1561.24" y="207.6" text-anchor="middle" font-family="Liberation Sans" font-size="10.2" fill="#333">12</text><rect x="1570" y="203" width="1" height="2" fill="#888"/><rect x="1580" y="201" width="1" height="5" fill="#333"/><rect x="1589" y="203" width="1" height="2" fill="#888"/><text x="1599.06" y="207.6" text-anchor="middle" font-family="Liberation Sans" font-size="10.2" fill="#333">13</text><rect x="1608" y="203" width="1" height="2" fill="#888"/><rect x="1617" y="201" width="1" height="5" fill="#333"/><rect x="1627" y="203" width="1" height="2" fill="#888"/><text x="1636.88" y="207.6" text-anchor="middle" font-family="Liberation Sans" font-size="10.2" fill="#333">14</text><rect x="1646" y="203" width="1" height="2" fill="#888"/><rect x="1655" y="201" width="1" height="5" fill="#333"/><rect x="1665" y="203" width="1" height="2" fill="#888"/><text x="1674.70" y="207.6" text-anchor="middle" font-family="Liberation Sans" font-size="10.2" fill="#333">15</text><rect x="1684" y="203" width="1" height="2" fill="#888"/><rect x="1693" y="201" width="1" height="5" fill="#333"/><rect x="1703" y="203" width="1" height="2" fill="#888"/><text x="1712.52" y="207.6" text-anchor="middle" font-family="Liberation Sans" font-size="10.2" fill="#333">16</text><rect x="1721" y="203" width="1" height="2" fill="#888"/><rect x="1731" y="201" width="1" height="5" fill="#333"/><rect x="1740" y="203" width="1" height="2" fill="#888"/><rect x="295" y="238" width="5" height="1" fill="#333"/><rect x="297" y="248" width="2" height="1" fill="#888"/><text x="0" y="0" transform="translate(301.6 257.56) rotate(-90)" text-anchor="middle" font-family="Liberation Sans" font-size="10.2" fill="#333">9</text><rect x="297" y="267" width="2" height="1" fill="#888"/><rect x="295" y="276" width="5" height="1" fill="#333"/><rect x="297" y="285" width="2" height="1" fill="#888"/><text x="0" y="0" transform="translate(301.6 295.32) rotate(-90)" text-anchor="middle" font-family="Liberation Sans" font-size="10.2" fill="#333">8</text><rect x="297" y="304" width="2" height="1" fill="#888"/><rect x="295" y="314" width="5" height="1" fill="#333"/><rect x="297" y="323" width="2" height="1" fill="#888"/><text x="0" y="0" transform="translate(301.6 333.08) rotate(-90)" text-anchor="middle" font-family="Liberation Sans" font-size="10.2" fill="#333">7</text><rect x="297" y="342" width="2" height="1" fill="#888"/><rect x="295" y="351" width="5" height="1" fill="#333"/><rect x="297" y="361" width="2" height="1" fill="#888"/><text x="0" y="0" transform="translate(301.6 370.84) rotate(-90)" text-anchor="middle" font-family="Liberation Sans" font-size="10.2" fill="#333">6</text><rect x="297" y="380" width="2" height="1" fill="#888"/><rect x="295" y="389" width="5" height="1" fill="#333"/><rect x="297" y="399" width="2" height="1" fill="#888"/><text x="0" y="0" transform="translate(301.6 408.60) rotate(-90)" text-anchor="middle" font-family="Liberation Sans" font-size="10.2" fill="#333">5</text><rect x="297" y="418" width="2" height="1" fill="#888"/><rect x="295" y="427" width="5" height="1" fill="#333"/><rect x="297" y="436" width="2" height="1" fill="#888"/><text x="0" y="0" transform="translate(301.6 446.36) rotate(-90)" text-anchor="middle" font-family="Liberation Sans" font-size="10.2" fill="#333">4</text><rect x="297" y="455" width="2" height="1" fill="#888"/><rect x="295" y="465" width="5" height="1" fill="#333"/><rect x="297" y="474" width="2" height="1" fill="#888"/><text x="0" y="0" transform="translate(301.6 484.12) rotate(-90)" text-anchor="middle" font-family="Liberation Sans" font-size="10.2" fill="#333">3</text><rect x="297" y="493" width="2" height="1" fill="#888"/><rect x="295" y="503" width="5" height="1" fill="#333"/><rect x="297" y="512" width="2" height="1" fill="#888"/><text x="0" y="0" transform="translate(301.6 521.88) rotate(-90)" text-anchor="middle" font-family="Liberation Sans" font-size="10.2" fill="#333">2</text><rect x="297" y="531" width="2" height="1" fill="#888"/><rect x="295" y="540" width="5" height="1" fill="#333"/><rect x="297" y="550" width="2" height="1" fill="#888"/><text x="0" y="0" transform="translate(301.6 559.64) rotate(-90)" text-anchor="middle" font-family="Liberation Sans" font-size="10.2" fill="#333">1</text><rect x="297" y="569" width="2" height="1" fill="#888"/><rect x="295" y="578" width="5" height="1" fill="#333"/><rect x="297" y="587" width="2" height="1" fill="#888"/><text x="0" y="0" transform="translate(301.6 597.40) rotate(-90)" text-anchor="middle" font-family="Liberation Sans" font-size="10.2" fill="#333">0</text><rect x="297" y="606" width="2" height="1" fill="#888"/><rect x="295" y="616" width="5" height="1" fill="#333"/><rect x="297" y="625" width="2" height="1" fill="#888"/><text x="0" y="0" transform="translate(301.6 635.16) rotate(-90)" text-anchor="middle" font-family="Liberation Sans" font-size="10.2" fill="#333">1</text><rect x="297" y="644" width="2" height="1" fill="#888"/><rect x="295" y="654" width="5" height="1" fill="#333"/><rect x="297" y="663" width="2" height="1" fill="#888"/><text x="0" y="0" transform="translate(301.6 672.92) rotate(-90)" text-anchor="middle" font-family="Liberation Sans" font-size="10.2" fill="#333">2</text><rect x="297" y="682" width="2" height="1" fill="#888"/><rect x="295" y="691" width="5" height="1" fill="#333"/><rect x="297" y="701" width="2" height="1" fill="#888"/><text x="0" y="0" transform="translate(301.6 710.68) rotate(-90)" text-anchor="middle" font-family="Liberation Sans" font-size="10.2" fill="#333">3</text><rect x="297" y="720" width="2" height="1" fill="#888"/><rect x="295" y="729" width="5" height="1" fill="#333"/><rect x="297" y="739" width="2" height="1" fill="#888"/><text x="0" y="0" transform="translate(301.6 748.44) rotate(-90)" text-anchor="middle" font-family="Liberation Sans" font-size="10.2" fill="#333">4</text><rect x="297" y="757" width="2" height="1" fill="#888"/><rect x="295" y="767" width="5" height="1" fill="#333"/><rect x="297" y="776" width="2" height="1" fill="#888"/><text x="0" y="0" transform="translate(301.6 786.20) rotate(-90)" text-anchor="middle" font-family="Liberation Sans" font-size="10.2" fill="#333">5</text><rect x="297" y="795" width="2" height="1" fill="#888"/><rect x="295" y="805" width="5" height="1" fill="#333"/><rect x="297" y="814" width="2" height="1" fill="#888"/><text x="0" y="0" transform="translate(301.6 823.96) rotate(-90)" text-anchor="middle" font-family="Liberation Sans" font-size="10.2" fill="#333">6</text><rect x="297" y="833" width="2" height="1" fill="#888"/><rect x="295" y="842" width="5" height="1" fill="#333"/><rect x="297" y="852" width="2" height="1" fill="#888"/><text x="0" y="0" transform="translate(301.6 861.72) rotate(-90)" text-anchor="middle" font-family="Liberation Sans" font-size="10.2" fill="#333">7</text><rect x="297" y="871" width="2" height="1" fill="#888"/><rect x="295" y="880" width="5" height="1" fill="#333"/><rect x="297" y="890" width="2" height="1" fill="#888"/><text x="0" y="0" transform="translate(301.6 899.48) rotate(-90)" text-anchor="middle" font-family="Liberation Sans" font-size="10.2" fill="#333">8</text><rect x="297" y="908" width="2" height="1" fill="#888"/><rect x="295" y="918" width="5" height="1" fill="#333"/><rect x="297" y="927" width="2" height="1" fill="#888"/><text x="0" y="0" transform="translate(301.6 937.24) rotate(-90)" text-anchor="middle" font-family="Liberation Sans" font-size="10.2" fill="#333">9</text><rect x="297" y="946" width="2" height="1" fill="#888"/>
<path d="M96.5 988.5H103.5V1001.5H96.5ZM103.5 988.5H112.5V1001.5H103.5" fill="none" stroke="#7a7a7a" stroke-width="1"/><path d="M105.5 994L108 996.5L112 990.5" fill="none" stroke="#7a7a7a" stroke-width="1.4"/>
<path d="M1429 992.5L1432.5 988.5L1436 992.5Z" fill="#666"/><path d="M1426 995H1439M1426 997.8H1439M1426 1000.6H1439" stroke="#666"/>
<rect x="1500" y="980" width="46" height="34" fill="#cbcbcb"/><rect x="240" y="1011" width="46" height="3" fill="#4a4744"/>
<g fill="none" stroke="#6a6a6a" stroke-width="1.2"><rect x="1514.5" y="988.5" width="16" height="15"/><path d="M1518.5 988.5V1003.5M1518.5 999.5H1530.5"/><rect x="1521.5" y="991.5" width="6" height="4"/></g>
<g fill="none" stroke="#6a6a6a" stroke-width="1.2"><rect x="1560.5" y="988.5" width="6" height="5"/><rect x="1569.5" y="988.5" width="6" height="5"/><rect x="1560.5" y="997.5" width="6" height="5"/><rect x="1569.5" y="997.5" width="6" height="5"/></g>
<g fill="none" stroke="#6a6a6a" stroke-width="1.1"><path d="M1606.5 988.5H1614.5V1002.5H1606.5ZM1614.5 988.5H1622.5V1002.5H1614.5"/><path d="M1608.5 991.5H1612.5M1608.5 994H1612.5M1608.5 996.5H1612.5M1608.5 999H1612.5M1616.5 991.5H1620.5M1616.5 994H1620.5M1616.5 996.5H1620.5M1616.5 999H1620.5"/></g>
<g fill="none" stroke="#6a6a6a" stroke-width="1.2"><path d="M1652 988.5H1669M1653.5 989V997.5H1667.5V989M1660.5 997.5V1002.5M1657 1002.5H1664M1657.5 992.5H1663.5"/></g>
<path d="M1689 995H1695" stroke="#555" stroke-width="1.5"/><path d="M1699 995.5H1799" stroke="#9c9c9c"/><rect x="1747" y="989" width="5" height="11" fill="#6e6e6e"/><path d="M1802 995H1810M1806 991V999" stroke="#555" stroke-width="1.6"/>
<g fill="none" stroke="#6a6a6a" stroke-width="1.1"><rect x="1883.5" y="987.5" width="12.5" height="12.5" rx="1"/><path d="M1889.75 989.5V992.5M1889.75 995V998M1885.5 993.75H1888.5M1891 993.75H1894"/></g>
</svg>
<div class="t" style="left:16.2px;top:13.2px;font-size:12.50px;color:#ffffff;transform:scaleX(0.953)">File</div>
<div class="t" style="left:75.5px;top:13.7px;font-size:12.50px;color:#b7472a;transform:scaleX(1.022)">Home</div>
<div class="t" style="left:141.4px;top:13.7px;font-size:12.50px;color:#ffffff;transform:scaleX(0.950)">Insert</div>
<div class="t" style="left:203.3px;top:13.7px;font-size:12.50px;color:#ffffff;transform:scaleX(0.931)">Draw</div>
<div class="t" style="left:263.5px;top:13.7px;font-size:12.50px;color:#ffffff;transform:scaleX(0.932)">Design</div>
<div class="t" style="left:333.2px;top:13.7px;font-size:12.50px;color:#ffffff;transform:scaleX(0.933)">Transitions</div>
<div class="t" style="left:423.0px;top:13.7px;font-size:12.50px;color:#ffffff;transform:scaleX(0.979)">Animations</div>
<div class="t" style="left:515.9px;top:13.7px;font-size:12.50px;color:#ffffff;transform:scaleX(0.923)">Slide Show</div>
<div class="t" style="left:606.6px;top:13.7px;font-size:12.50px;color:#ffffff;transform:scaleX(0.910)">Review</div>
<div class="t" style="left:676.8px;top:13.7px;font-size:12.50px;color:#ffffff;transform:scaleX(0.941)">View</div>
<div class="t" style="left:734.1px;top:13.7px;font-size:12.50px;color:#ffffff;transform:scaleX(0.992)">Help</div>
<div class="t" style="left:792.1px;top:13.7px;font-size:12.50px;color:#ffffff;transform:scaleX(1.004)">MLC</div>
<div class="t" style="left:871.0px;top:13.4px;font-size:12.50px;color:#f4e3dd;transform:scaleX(0.972)">Tell me what you want to do</div>
<div class="t" style="left:1831.0px;top:12.8px;font-size:12.50px;color:#ffffff;transform:scaleX(0.909)">Share</div>
<div class="t" style="left:17.5px;top:92.9px;font-size:12.50px;color:#262626;transform:scaleX(0.890)">Paste</div>
<div class="t" style="left:31.7px;top:141.6px;font-size:12.50px;color:#262626;transform:scaleX(0.938)">Clipboard</div>
<div class="t" style="left:161.3px;top:92.9px;font-size:12.50px;color:#262626;transform:scaleX(0.987)">New</div>
<div class="t" style="left:156.5px;top:109.0px;font-size:12.50px;color:#262626;transform:scaleX(0.911)">Slide</div>
<div class="t" style="left:240.3px;top:50.9px;font-size:12.50px;color:#262626;transform:scaleX(0.957)">Layout</div>
<div class="t" style="left:240.7px;top:83.0px;font-size:12.50px;color:#262626;transform:scaleX(0.856)">Reset</div>
<div class="t" style="left:240.3px;top:115.2px;font-size:12.50px;color:#262626;transform:scaleX(0.955)">Section</div>
<div class="t" style="left:204.4px;top:141.6px;font-size:12.50px;color:#262626;transform:scaleX(0.885)">Slides</div>
<div class="t" style="left:546.0px;top:59.1px;font-size:12.00px;color:#a8a8a8;transform:scaleX(0.910)">24+</div>
<div class="t" style="left:499.6px;top:141.7px;font-size:12.50px;color:#262626;transform:scaleX(0.967)">Font</div>
<div class="t" style="left:903.7px;top:141.6px;font-size:12.50px;color:#262626;transform:scaleX(0.909)">Paragraph</div>
<div class="t" style="left:1011.2px;top:50.9px;font-size:12.50px;color:#a5a5a5;transform:scaleX(0.949)">Text Direction</div>
<div class="t" style="left:1011.2px;top:83.0px;font-size:12.50px;color:#a5a5a5;transform:scaleX(0.957)">Align Text</div>
<div class="t" style="left:1011.6px;top:115.2px;font-size:12.50px;color:#a5a5a5;transform:scaleX(0.948)">Convert to SmartArt</div>
<div class="t" style="left:1341.5px;top:141.6px;font-size:12.50px;color:#262626;transform:scaleX(0.956)">Drawing</div>
<div class="t" style="left:1370.2px;top:87.5px;font-size:12.50px;color:#262626;transform:scaleX(0.955)">Arrange</div>
<div class="t" style="left:1429.0px;top:87.5px;font-size:12.50px;color:#a5a5a5;transform:scaleX(0.969)">Quick</div>
<div class="t" style="left:1425.5px;top:103.2px;font-size:12.50px;color:#a5a5a5;transform:scaleX(0.897)">Styles</div>
<div class="t" style="left:1505.4px;top:48.1px;font-size:12.50px;color:#a5a5a5;transform:scaleX(0.920)">Shape Fill</div>
<div class="t" style="left:1505.3px;top:80.1px;font-size:12.50px;color:#a5a5a5;transform:scaleX(0.951)">Shape Outline</div>
<div class="t" style="left:1508.3px;top:115.0px;font-size:12.50px;color:#a5a5a5;transform:scaleX(0.916)">Shape Effects</div>
<div class="t" style="left:1648.2px;top:50.9px;font-size:12.50px;color:#262626;transform:scaleX(0.965)">Find</div>
<div class="t" style="left:1645.9px;top:82.9px;font-size:12.50px;color:#262626;transform:scaleX(0.893)">Replace</div>
<div class="t" style="left:1648.3px;top:114.9px;font-size:12.50px;color:#262626;transform:scaleX(0.906)">Select</div>
<div class="t" style="left:1650.7px;top:141.8px;font-size:12.50px;color:#262626;transform:scaleX(0.965)">Editing</div>
<div class="t" style="left:1754.5px;top:93.4px;font-size:12.50px;color:#a5a5a5;transform:scaleX(0.961)">Dictate</div>
<div class="t" style="left:1760.4px;top:141.8px;font-size:12.50px;color:#262626;transform:scaleX(0.848)">Voice</div>
<div class="t" style="left:4.4px;top:169.4px;font-size:12.50px;color:#ababab;transform:scaleX(0.919)">AutoSave</div>
<div class="t" style="left:80.0px;top:170.7px;font-size:10.00px;color:#cdcdcd;transform:scaleX(0.929)">Off</div>
<div class="t" style="left:7.6px;top:988.2px;font-size:12.50px;color:#444444;transform:scaleX(0.916)">Slide 1 of 1</div>
<div class="t" style="left:142.5px;top:988.9px;font-size:12.50px;color:#444444;transform:scaleX(0.907)">English (United States)</div>
<div class="t" style="left:1444.6px;top:989.0px;font-size:12.50px;color:#333333;transform:scaleX(0.903)">Notes</div>
<div class="t" style="left:1825.9px;top:989.2px;font-size:12.50px;color:#333333;transform:scaleX(0.848)">101%</div>
<div class="t" style="left:6.3px;top:209.1px;font-size:15.00px;color:#c0472a;transform:scaleX(0.800)">1</div>
</body></html>
